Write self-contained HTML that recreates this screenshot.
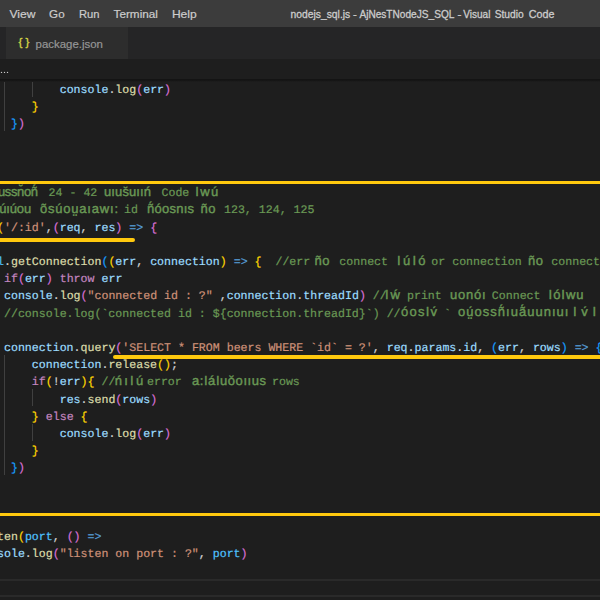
<!DOCTYPE html>
<html><head><meta charset="utf-8">
<style>
*{margin:0;padding:0;box-sizing:border-box}
html,body{width:600px;height:600px;overflow:hidden;background:#1e1e1e}
body{position:relative;font-family:"Liberation Sans",sans-serif}
.title{position:absolute;left:0;top:0;width:600px;height:27px;background:#3c3c3c;color:#cccccc;font-size:12px}
.tabs{position:absolute;left:0;top:27px;width:600px;height:32px;background:#252526}
.tab{position:absolute;left:6px;top:0;width:122px;height:32px;background:#2d2d2d}
.crumb{position:absolute;left:0;top:59px;width:600px;height:20px;background:#1e1e1e}
.shadow{position:absolute;left:0;top:78.8px;width:600px;height:3.4px;background:linear-gradient(#131313 0,#151515 45%,#1b1b1b 80%,#1e1e1e 100%)}
svg.ui{position:absolute;left:0;top:0}
.u{font-family:"Liberation Sans",sans-serif;font-size:11.5px;fill:#cccccc;white-space:pre;stroke:#cccccc;stroke-width:0.2px}
.tt{font-size:11px;stroke-width:0.3px}
.br{font-family:"Liberation Sans",sans-serif;font-size:11.5px;stroke-width:0.35px}
.ig{position:absolute;width:1px;background:#404040}
svg.ed{position:absolute;left:0;top:0}
.m{font-family:"Liberation Mono",monospace;font-size:11.6px;white-space:pre;stroke-width:0.2px;text-rendering:geometricPrecision}
.t{font-family:"Liberation Sans",sans-serif;font-size:13px;white-space:pre;stroke-width:0.4px;text-rendering:geometricPrecision}
.yl{position:absolute;background:#ffc90e;height:4px;border-radius:2px}
.hl{position:absolute;left:0;width:600px;height:2px;background:#2a2a2a}
</style></head><body>
<div class="title"></div>
<div class="tabs"><div class="tab"></div></div>
<div class="crumb"></div>
<svg class="ui" width="600" height="80">
<text x="9.4" y="18" class="u" textLength="26.0" lengthAdjust="spacingAndGlyphs">View</text>
<text x="49.1" y="18" class="u" textLength="15.5" lengthAdjust="spacingAndGlyphs">Go</text>
<text x="79.0" y="18" class="u" textLength="20.6" lengthAdjust="spacingAndGlyphs">Run</text>
<text x="113.6" y="18" class="u" textLength="44.3" lengthAdjust="spacingAndGlyphs">Terminal</text>
<text x="171.9" y="18" class="u" textLength="24.8" lengthAdjust="spacingAndGlyphs">Help</text>
<text x="290.6" y="18" class="u tt" textLength="59.6" lengthAdjust="spacingAndGlyphs">nodejs_sql.js</text>
<text x="352.9" y="18" class="u tt" textLength="3.8" lengthAdjust="spacingAndGlyphs">-</text>
<text x="359.4" y="18" class="u tt" textLength="95.0" lengthAdjust="spacingAndGlyphs">AjNesTNodeJS_SQL</text>
<text x="457.6" y="18" class="u tt" textLength="3.9" lengthAdjust="spacingAndGlyphs">-</text>
<text x="463.2" y="18" class="u tt" textLength="27.2" lengthAdjust="spacingAndGlyphs">Visual</text>
<text x="494.7" y="18" class="u tt" textLength="29.0" lengthAdjust="spacingAndGlyphs">Studio</text>
<text x="528.8" y="18" class="u tt" textLength="25.6" lengthAdjust="spacingAndGlyphs">Code</text>
<text x="35.6" y="47.5" class="u" style="fill:#969696;stroke:#969696;font-size:11.5px" textLength="67.3" lengthAdjust="spacingAndGlyphs">package.json</text>
<text x="18.6" y="46" class="br" fill="#d4d445" stroke="#d4d445">{</text>
<text x="25.4" y="46" class="br" fill="#d4d445" stroke="#d4d445">}</text>
<circle cx="1.5" cy="72.4" r="0.7" fill="#c8c8c8"/><circle cx="4.5" cy="72.4" r="0.7" fill="#c8c8c8"/><circle cx="7.5" cy="72.4" r="0.7" fill="#c8c8c8"/>
</svg>
<div class="ig" style="left:4px;top:79.7px;height:51.6px"></div>
<div class="ig" style="left:32px;top:79.7px;height:17.2px"></div>
<div class="ig" style="left:4px;top:354.9px;height:120.4px"></div>
<div class="ig" style="left:32px;top:389.3px;height:17.2px"></div>
<div class="ig" style="left:32px;top:423.7px;height:17.2px"></div>
<svg class="ed" width="600" height="600">
<text x="59.68" y="93.00" class="m"><tspan fill="#9cdcfe" stroke="#9cdcfe">console</tspan><tspan fill="#d4d4d4" stroke="#d4d4d4">.</tspan><tspan fill="#dcdcaa" stroke="#dcdcaa">log</tspan><tspan fill="#da70d6" stroke="#da70d6">(</tspan><tspan fill="#9cdcfe" stroke="#9cdcfe">err</tspan><tspan fill="#da70d6" stroke="#da70d6">)</tspan></text>
<text x="31.84" y="110.20" class="m"><tspan fill="#ffd700" stroke="#ffd700">}</tspan></text>
<text x="10.96" y="127.40" class="m"><tspan fill="#179fff" stroke="#179fff">}</tspan><tspan fill="#da70d6" stroke="#da70d6">)</tspan></text>
<text x="-2.00" y="195.90" class="t" fill="#6a9955" stroke="#6a9955" textLength="40.00" lengthAdjust="spacing">ussn̆oñ́</text>
<text x="48.60" y="196.20" class="m" fill="#6a9955" stroke="#6a9955">24 - 42</text>
<text x="104.00" y="195.90" class="t" fill="#6a9955" stroke="#6a9955" textLength="47.00" lengthAdjust="spacing">uıus̆uııń</text>
<text x="161.50" y="196.20" class="m" fill="#6a9955" stroke="#6a9955">Code</text>
<text x="195.30" y="195.90" class="t" fill="#6a9955" stroke="#6a9955" textLength="23.00" lengthAdjust="spacing">Ιwú</text>
<text x="-1.00" y="213.10" class="t" fill="#6a9955" stroke="#6a9955" textLength="32.00" lengthAdjust="spacing">úıúou</text>
<text x="40.00" y="213.10" class="t" fill="#6a9955" stroke="#6a9955" textLength="78.00" lengthAdjust="spacing">õsúoṳaıawı:</text>
<text x="124.00" y="213.40" class="m" fill="#6a9955" stroke="#6a9955">id</text>
<text x="147.00" y="213.10" class="t" fill="#6a9955" stroke="#6a9955" textLength="47.00" lengthAdjust="spacing">ñ́óosnıs</text>
<text x="200.50" y="213.10" class="t" fill="#6a9955" stroke="#6a9955" textLength="15.10" lengthAdjust="spacing">ño</text>
<text x="224.00" y="213.40" class="m" fill="#6a9955" stroke="#6a9955">123, 124, 125</text>
<text x="-51.68" y="230.60" class="m"><tspan fill="#4fc1ff" stroke="#4fc1ff">app</tspan><tspan fill="#d4d4d4" stroke="#d4d4d4">.</tspan><tspan fill="#dcdcaa" stroke="#dcdcaa">get</tspan><tspan fill="#ffd700" stroke="#ffd700">(</tspan><tspan fill="#ce9178" stroke="#ce9178">&#x27;/:id&#x27;</tspan><tspan fill="#d4d4d4" stroke="#d4d4d4">,</tspan><tspan fill="#da70d6" stroke="#da70d6">(</tspan><tspan fill="#9cdcfe" stroke="#9cdcfe">req</tspan><tspan fill="#d4d4d4" stroke="#d4d4d4">, </tspan><tspan fill="#9cdcfe" stroke="#9cdcfe">res</tspan><tspan fill="#da70d6" stroke="#da70d6">)</tspan><tspan fill="#d4d4d4" stroke="#d4d4d4"> </tspan><tspan fill="#569cd6" stroke="#569cd6">=&gt;</tspan><tspan fill="#d4d4d4" stroke="#d4d4d4"> </tspan><tspan fill="#da70d6" stroke="#da70d6">{</tspan></text>
<text x="-23.84" y="265.00" class="m"><tspan fill="#4fc1ff" stroke="#4fc1ff">pool</tspan><tspan fill="#d4d4d4" stroke="#d4d4d4">.</tspan><tspan fill="#dcdcaa" stroke="#dcdcaa">getConnection</tspan><tspan fill="#179fff" stroke="#179fff">(</tspan><tspan fill="#ffd700" stroke="#ffd700">(</tspan><tspan fill="#9cdcfe" stroke="#9cdcfe">err</tspan><tspan fill="#d4d4d4" stroke="#d4d4d4">, </tspan><tspan fill="#9cdcfe" stroke="#9cdcfe">connection</tspan><tspan fill="#ffd700" stroke="#ffd700">)</tspan><tspan fill="#d4d4d4" stroke="#d4d4d4"> </tspan><tspan fill="#569cd6" stroke="#569cd6">=&gt;</tspan><tspan fill="#d4d4d4" stroke="#d4d4d4"> </tspan><tspan fill="#ffd700" stroke="#ffd700">{</tspan><tspan fill="#6a9955" stroke="#6a9955">  //err </tspan></text>
<text x="314.50" y="264.70" class="t" fill="#6a9955" stroke="#6a9955" textLength="15.00" lengthAdjust="spacing">ño</text>
<text x="339.30" y="265.00" class="m" fill="#6a9955" stroke="#6a9955">connect</text>
<text x="397.00" y="264.70" class="t" fill="#6a9955" stroke="#6a9955" textLength="28.50" lengthAdjust="spacing">ΙúΙó</text>
<text x="431.30" y="265.00" class="m" fill="#6a9955" stroke="#6a9955">or connection</text>
<text x="528.00" y="264.70" class="t" fill="#6a9955" stroke="#6a9955" textLength="15.00" lengthAdjust="spacing">ño</text>
<text x="551.30" y="265.00" class="m" fill="#6a9955" stroke="#6a9955">connect</text>
<text x="4.00" y="282.20" class="m"><tspan fill="#c586c0" stroke="#c586c0">if</tspan><tspan fill="#da70d6" stroke="#da70d6">(</tspan><tspan fill="#9cdcfe" stroke="#9cdcfe">err</tspan><tspan fill="#da70d6" stroke="#da70d6">)</tspan><tspan fill="#d4d4d4" stroke="#d4d4d4"> </tspan><tspan fill="#c586c0" stroke="#c586c0">throw</tspan><tspan fill="#d4d4d4" stroke="#d4d4d4"> </tspan><tspan fill="#9cdcfe" stroke="#9cdcfe">err</tspan></text>
<text x="4.00" y="299.40" class="m"><tspan fill="#9cdcfe" stroke="#9cdcfe">console</tspan><tspan fill="#d4d4d4" stroke="#d4d4d4">.</tspan><tspan fill="#dcdcaa" stroke="#dcdcaa">log</tspan><tspan fill="#da70d6" stroke="#da70d6">(</tspan><tspan fill="#ce9178" stroke="#ce9178">&quot;connected id : ?&quot;</tspan><tspan fill="#d4d4d4" stroke="#d4d4d4"> ,</tspan><tspan fill="#9cdcfe" stroke="#9cdcfe">connection</tspan><tspan fill="#d4d4d4" stroke="#d4d4d4">.</tspan><tspan fill="#9cdcfe" stroke="#9cdcfe">threadId</tspan><tspan fill="#da70d6" stroke="#da70d6">)</tspan><tspan fill="#6a9955" stroke="#6a9955"> //</tspan></text>
<text x="385.00" y="299.10" class="t" fill="#6a9955" stroke="#6a9955" textLength="15.00" lengthAdjust="spacing">Ιẃ</text>
<text x="407.00" y="299.40" class="m" fill="#6a9955" stroke="#6a9955">print</text>
<text x="450.00" y="299.10" class="t" fill="#6a9955" stroke="#6a9955" textLength="35.60" lengthAdjust="spacing">uonóı</text>
<text x="491.80" y="299.40" class="m" fill="#6a9955" stroke="#6a9955">Connect</text>
<text x="548.60" y="299.10" class="t" fill="#6a9955" stroke="#6a9955" textLength="34.90" lengthAdjust="spacing">ΙóΙwu</text>
<text x="4.00" y="316.60" class="m"><tspan fill="#6a9955" stroke="#6a9955">//console.log(`connected id : ${connection.threadId}`) //</tspan></text>
<text x="401.00" y="316.30" class="t" fill="#6a9955" stroke="#6a9955" textLength="36.00" lengthAdjust="spacing">óosΙv́</text>
<text x="444.00" y="316.60" class="m" fill="#6a9955" stroke="#6a9955">`</text>
<text x="458.00" y="316.30" class="t" fill="#6a9955" stroke="#6a9955" textLength="110.40" lengthAdjust="spacing">oṳ́ossñ́ıuã́uunıuı</text>
<text x="573.00" y="316.30" class="t" fill="#6a9955" stroke="#6a9955" textLength="35.00" lengthAdjust="spacing">Ιv́Ιó</text>
<text x="4.00" y="351.00" class="m"><tspan fill="#9cdcfe" stroke="#9cdcfe">connection</tspan><tspan fill="#d4d4d4" stroke="#d4d4d4">.</tspan><tspan fill="#dcdcaa" stroke="#dcdcaa">query</tspan><tspan fill="#da70d6" stroke="#da70d6">(</tspan><tspan fill="#ce9178" stroke="#ce9178">&#x27;SELECT * FROM beers WHERE `id` = ?&#x27;</tspan><tspan fill="#d4d4d4" stroke="#d4d4d4">, </tspan><tspan fill="#9cdcfe" stroke="#9cdcfe">req</tspan><tspan fill="#d4d4d4" stroke="#d4d4d4">.</tspan><tspan fill="#9cdcfe" stroke="#9cdcfe">params</tspan><tspan fill="#d4d4d4" stroke="#d4d4d4">.</tspan><tspan fill="#9cdcfe" stroke="#9cdcfe">id</tspan><tspan fill="#d4d4d4" stroke="#d4d4d4">, </tspan><tspan fill="#179fff" stroke="#179fff">(</tspan><tspan fill="#9cdcfe" stroke="#9cdcfe">err</tspan><tspan fill="#d4d4d4" stroke="#d4d4d4">, </tspan><tspan fill="#9cdcfe" stroke="#9cdcfe">rows</tspan><tspan fill="#179fff" stroke="#179fff">)</tspan><tspan fill="#d4d4d4" stroke="#d4d4d4"> </tspan><tspan fill="#569cd6" stroke="#569cd6">=&gt;</tspan><tspan fill="#d4d4d4" stroke="#d4d4d4"> </tspan><tspan fill="#179fff" stroke="#179fff">{</tspan></text>
<text x="31.84" y="368.20" class="m"><tspan fill="#9cdcfe" stroke="#9cdcfe">connection</tspan><tspan fill="#d4d4d4" stroke="#d4d4d4">.</tspan><tspan fill="#dcdcaa" stroke="#dcdcaa">release</tspan><tspan fill="#ffd700" stroke="#ffd700">()</tspan><tspan fill="#d4d4d4" stroke="#d4d4d4">;</tspan></text>
<text x="31.84" y="385.40" class="m"><tspan fill="#c586c0" stroke="#c586c0">if</tspan><tspan fill="#ffd700" stroke="#ffd700">(</tspan><tspan fill="#d4d4d4" stroke="#d4d4d4">!</tspan><tspan fill="#9cdcfe" stroke="#9cdcfe">err</tspan><tspan fill="#ffd700" stroke="#ffd700">)</tspan><tspan fill="#ffd700" stroke="#ffd700">{</tspan><tspan fill="#6a9955" stroke="#6a9955"> //</tspan></text>
<text x="114.80" y="385.10" class="t" fill="#6a9955" stroke="#6a9955" textLength="28.40" lengthAdjust="spacing">ńıΙú</text>
<text x="147.00" y="385.40" class="m" fill="#6a9955" stroke="#6a9955">error</text>
<text x="192.00" y="385.10" class="t" fill="#6a9955" stroke="#6a9955" textLength="74.00" lengthAdjust="spacing">a:ΙáΙuŏoııus</text>
<text x="272.00" y="385.40" class="m" fill="#6a9955" stroke="#6a9955">rows</text>
<text x="59.68" y="402.60" class="m"><tspan fill="#9cdcfe" stroke="#9cdcfe">res</tspan><tspan fill="#d4d4d4" stroke="#d4d4d4">.</tspan><tspan fill="#dcdcaa" stroke="#dcdcaa">send</tspan><tspan fill="#da70d6" stroke="#da70d6">(</tspan><tspan fill="#9cdcfe" stroke="#9cdcfe">rows</tspan><tspan fill="#da70d6" stroke="#da70d6">)</tspan></text>
<text x="31.84" y="419.80" class="m"><tspan fill="#ffd700" stroke="#ffd700">}</tspan><tspan fill="#d4d4d4" stroke="#d4d4d4"> </tspan><tspan fill="#c586c0" stroke="#c586c0">else</tspan><tspan fill="#d4d4d4" stroke="#d4d4d4"> </tspan><tspan fill="#ffd700" stroke="#ffd700">{</tspan></text>
<text x="59.68" y="437.00" class="m"><tspan fill="#9cdcfe" stroke="#9cdcfe">console</tspan><tspan fill="#d4d4d4" stroke="#d4d4d4">.</tspan><tspan fill="#dcdcaa" stroke="#dcdcaa">log</tspan><tspan fill="#da70d6" stroke="#da70d6">(</tspan><tspan fill="#9cdcfe" stroke="#9cdcfe">err</tspan><tspan fill="#da70d6" stroke="#da70d6">)</tspan></text>
<text x="31.84" y="454.20" class="m"><tspan fill="#ffd700" stroke="#ffd700">}</tspan></text>
<text x="10.96" y="471.40" class="m"><tspan fill="#179fff" stroke="#179fff">}</tspan><tspan fill="#da70d6" stroke="#da70d6">)</tspan></text>
<text x="-51.68" y="540.20" class="m"><tspan fill="#4fc1ff" stroke="#4fc1ff">app</tspan><tspan fill="#d4d4d4" stroke="#d4d4d4">.</tspan><tspan fill="#dcdcaa" stroke="#dcdcaa">listen</tspan><tspan fill="#ffd700" stroke="#ffd700">(</tspan><tspan fill="#4fc1ff" stroke="#4fc1ff">port</tspan><tspan fill="#d4d4d4" stroke="#d4d4d4">, </tspan><tspan fill="#da70d6" stroke="#da70d6">()</tspan><tspan fill="#d4d4d4" stroke="#d4d4d4"> </tspan><tspan fill="#569cd6" stroke="#569cd6">=&gt;</tspan></text>
<text x="-23.84" y="557.40" class="m"><tspan fill="#9cdcfe" stroke="#9cdcfe">console</tspan><tspan fill="#d4d4d4" stroke="#d4d4d4">.</tspan><tspan fill="#dcdcaa" stroke="#dcdcaa">log</tspan><tspan fill="#da70d6" stroke="#da70d6">(</tspan><tspan fill="#ce9178" stroke="#ce9178">&quot;listen on port : ?&quot;</tspan><tspan fill="#d4d4d4" stroke="#d4d4d4">, </tspan><tspan fill="#4fc1ff" stroke="#4fc1ff">port</tspan><tspan fill="#da70d6" stroke="#da70d6">)</tspan></text>
</svg>
<div class="shadow"></div>
<div class="yl" style="left:-4px;top:180.6px;height:3.6px;width:608px"></div>
<div class="yl" style="left:-4px;top:237.9px;height:3.8px;width:139px"></div>
<div class="yl" style="left:113px;top:354.9px;height:3.8px;width:491px"></div>
<div class="yl" style="left:-4px;top:512.6px;height:3.6px;width:608px"></div>
<div class="hl" style="top:579px"></div>
<div class="hl" style="top:594.5px"></div>
</body></html>
